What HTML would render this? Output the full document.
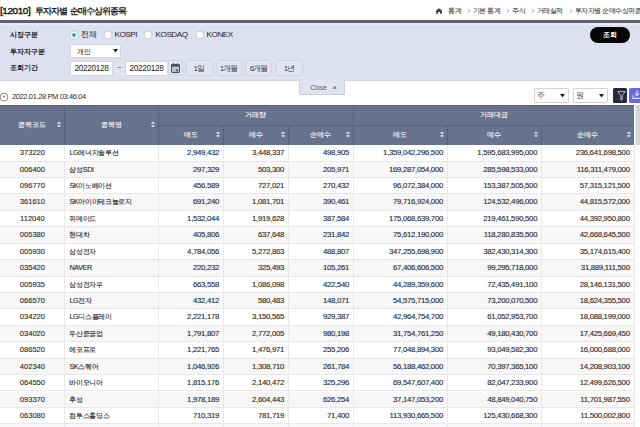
<!DOCTYPE html><html><head><meta charset="utf-8"><style>
*{box-sizing:border-box}
html,body{margin:0;padding:0;width:640px;height:427px;overflow:hidden;background:#fff;font-family:"Liberation Sans",sans-serif;color:#333}
.ab{position:absolute;white-space:nowrap}
.title{left:0;top:3.6px;font-size:9.9px;letter-spacing:-0.38px;color:#1e1e1e;line-height:14px;-webkit-text-stroke:0.45px #1e1e1e}
.title.k{font-size:9px;font-weight:bold;letter-spacing:-1px;-webkit-text-stroke:0}
.bc{top:5px;font-size:7px;letter-spacing:-0.5px;color:#4f4f4f;line-height:12px;-webkit-text-stroke:0.12px #4f4f4f}
.hline{left:0;top:20.3px;width:640px;height:2.5px;background:#5f6169}
.panel{left:0;top:22.7px;width:640px;height:58.6px;background:linear-gradient(#dde0ef 0,#dde0ef 52px,#e1e3f0 56px,#d3d6e2 57px,#d3d6e2 58.6px)}
.panel:before{content:"";position:absolute;left:0;top:0;width:640px;height:2px;background:#e9ebf6}
.lbl{font-size:7.4px;font-weight:bold;color:#222;line-height:10px}
.radio{width:8px;height:8px;border-radius:50%;background:#fff;border:1px solid #d4d6df}
.radio.on{border:1.2px solid #9fd3dd;box-shadow:0 0 0 0.5px #c6e8ee}
.radio.on:after{content:"";position:absolute;left:1.6px;top:1.6px;width:3.2px;height:3.2px;border-radius:50%;background:#3f9db3}
.rt{font-size:8.1px;color:#222;line-height:10px;letter-spacing:-0.45px}
.inp{background:#fff;border:1px solid #d3d5e0;border-radius:1px}
.btn{border:1px solid #cfd2e0;background:#e2e5f1;border-radius:1.5px;font-size:8px;letter-spacing:-1px;text-indent:-1px;color:#3a3a3a;text-align:center;line-height:15.5px}
.tab{left:298.8px;top:79.5px;width:46px;height:15.8px;background:#e1e3f0;border:1px solid #cdd0dc;border-top:none;border-radius:0 0 1.5px 1.5px}
.hdr{background:#67728d;color:#f2f3f7;font-size:6.8px;text-align:center;-webkit-text-stroke:0.15px #f2f3f7}
.vd{background:#56617c;width:1px}
.cell{font-size:7.8px;letter-spacing:-0.3px;color:#2a2a2a;line-height:12px;-webkit-text-stroke:0.12px #2a2a2a}
.code{font-size:7.6px;letter-spacing:0}
.nm{font-size:7.2px;letter-spacing:-0.35px}
.sort{width:4px;height:7px}
</style></head><body>

<div class="ab title">[12010]</div>
<div class="ab title k" style="left:34.8px">투자자별</div>
<div class="ab title k" style="left:69.8px">순매수상위종목</div>
<svg class="ab" style="left:436px;top:8.2px" width="6" height="6" viewBox="0 0 6 6"><path d="M0.1 2.6 Q0.3 2.2 3 0.2 Q5.7 2.2 5.9 2.6 L5.9 5.7 L4 5.7 L4 4.1 L2 4.1 L2 5.7 L0.1 5.7 Z" fill="#404040"/></svg>
<div class="ab bc" style="left:448px">통계</div>
<div class="ab bc" style="left:472.8px">기본 통계</div>
<div class="ab bc" style="left:512.4px">주식</div>
<div class="ab bc" style="left:536.8px">거래실적</div>
<div class="ab bc" style="left:574.6px">투자자별 순매수상위종목</div>
<svg class="ab" style="left:467px;top:8.2px" width="4" height="6" viewBox="0 0 4 6"><path d="M0.9 0.9 L3.1 3 L0.9 5.1" fill="none" stroke="#9a9a9a" stroke-width="0.7"/></svg>
<svg class="ab" style="left:505.6px;top:8.2px" width="4" height="6" viewBox="0 0 4 6"><path d="M0.9 0.9 L3.1 3 L0.9 5.1" fill="none" stroke="#9a9a9a" stroke-width="0.7"/></svg>
<svg class="ab" style="left:531.4px;top:8.2px" width="4" height="6" viewBox="0 0 4 6"><path d="M0.9 0.9 L3.1 3 L0.9 5.1" fill="none" stroke="#9a9a9a" stroke-width="0.7"/></svg>
<svg class="ab" style="left:568.7px;top:8.2px" width="4" height="6" viewBox="0 0 4 6"><path d="M0.9 0.9 L3.1 3 L0.9 5.1" fill="none" stroke="#9a9a9a" stroke-width="0.7"/></svg>
<div class="ab hline"></div>
<div class="ab panel"></div>
<div class="ab lbl" style="left:10px;top:29.6px">시장구분</div>
<div class="ab lbl" style="left:10px;top:46.6px">투자자구분</div>
<div class="ab lbl" style="left:10px;top:63.3px">조회기간</div>
<svg class="ab" style="left:69.1px;top:30px" width="10" height="10" viewBox="0 0 10 10"><circle cx="5" cy="5" r="4.1" fill="#fff" stroke="#a9dde6" stroke-width="1.1"/><circle cx="5" cy="5" r="1.9" fill="#4597a9"/></svg>
<svg class="ab" style="left:102.5px;top:30px" width="10" height="10" viewBox="0 0 10 10"><circle cx="5" cy="5" r="3.9" fill="#fff" stroke="#c4c7d2" stroke-width="0.9"/></svg>
<svg class="ab" style="left:143.3px;top:30px" width="10" height="10" viewBox="0 0 10 10"><circle cx="5" cy="5" r="3.9" fill="#fff" stroke="#c4c7d2" stroke-width="0.9"/></svg>
<svg class="ab" style="left:194.5px;top:30px" width="10" height="10" viewBox="0 0 10 10"><circle cx="5" cy="5" r="3.9" fill="#fff" stroke="#c4c7d2" stroke-width="0.9"/></svg>
<div class="ab rt" style="left:81px;top:29.8px">전체</div>
<div class="ab rt" style="left:114.5px;top:29.8px">KOSPI</div>
<div class="ab rt" style="left:155.6px;top:29.8px">KOSDAQ</div>
<div class="ab rt" style="left:206.6px;top:29.8px">KONEX</div>
<div class="ab inp" style="left:70px;top:43.7px;width:51.3px;height:14.5px"></div>
<div class="ab" style="left:76.6px;top:46.6px;font-size:7px;color:#3c3c3c;line-height:10px;-webkit-text-stroke:0.1px #3c3c3c">개인</div>
<svg class="ab" style="left:113px;top:49px" width="5" height="4" viewBox="0 0 5 4"><path d="M0 0 L5 0 L2.5 3.5 Z" fill="#222"/></svg>
<div class="ab inp" style="left:70px;top:60.6px;width:43px;height:15px"></div>
<div class="ab" style="left:74.5px;top:64px;font-size:8.2px;letter-spacing:-0.3px;color:#222;line-height:10px">20220128</div>
<div class="ab" style="left:113px;top:60px;width:12px;height:16px;background:#e1e3f0"></div>
<div class="ab" style="left:117.5px;top:62.5px;font-size:7px;color:#444;line-height:10px">~</div>
<div class="ab inp" style="left:125px;top:60.6px;width:43.2px;height:15px"></div>
<div class="ab" style="left:129.4px;top:64px;font-size:8.2px;letter-spacing:-0.3px;color:#222;line-height:10px">20220128</div>
<div class="ab btn" style="left:168px;top:60.3px;width:14.5px;height:15px"></div>
<svg class="ab" style="left:171px;top:63px" width="9" height="10" viewBox="0 0 9 10"><rect x="0.6" y="1.6" width="7.8" height="7.8" rx="0.8" fill="none" stroke="#4a5063" stroke-width="1.2"/><rect x="0.6" y="1.6" width="7.8" height="2.2" fill="#4a5063"/><rect x="2" y="0" width="1" height="2" fill="#4a5063"/><rect x="6" y="0" width="1" height="2" fill="#4a5063"/><rect x="1.6" y="4.6" width="5.8" height="4" fill="#b9bdcb"/><rect x="5" y="6.4" width="2" height="1.8" fill="#4a5063"/></svg>
<div class="ab btn" style="left:186px;top:60.2px;width:26.5px;height:15.4px">1일</div>
<div class="ab btn" style="left:216px;top:60.2px;width:26px;height:15.4px">1개월</div>
<div class="ab btn" style="left:245.4px;top:60.2px;width:27px;height:15.4px">6개월</div>
<div class="ab btn" style="left:276px;top:60.2px;width:27px;height:15.4px">1년</div>
<div class="ab" style="left:590px;top:26.5px;width:40.3px;height:16px;border-radius:8px;background:#050505;color:#fff;font-size:7.4px;font-weight:bold;text-align:center;line-height:16px">조회</div>
<div class="ab tab"></div>
<div class="ab" style="left:310.5px;top:82.5px;font-size:6.4px;color:#555;line-height:9px">Close</div>
<div class="ab" style="left:332.6px;top:83.3px;font-size:7.4px;color:#333;line-height:9px">×</div>
<svg class="ab" style="left:-0.9px;top:91.5px" width="10" height="10" viewBox="0 0 10 10"><circle cx="5" cy="5" r="3.9" fill="none" stroke="#8a8a8a" stroke-width="1"/><path d="M3.6 3.8 L6 5.3" fill="none" stroke="#777" stroke-width="1.1"/></svg>
<div class="ab" style="left:12px;top:91.6px;font-size:7.5px;letter-spacing:-0.38px;color:#2e2e2e;line-height:9px">2022.01.28 PM 03:46:04</div>
<div class="ab inp" style="left:534.4px;top:88.1px;width:35px;height:14.6px;border-color:#d3d3d3"></div>
<div class="ab" style="left:537.0px;top:89.6px;font-size:8.2px;color:#505050;line-height:11px">주</div>
<svg class="ab" style="left:559.9px;top:93.5px" width="5" height="4" viewBox="0 0 5 4"><path d="M0 0 L5 0 L2.5 3.5 Z" fill="#222"/></svg>
<div class="ab inp" style="left:573.1px;top:88.1px;width:35px;height:14.6px;border-color:#d3d3d3"></div>
<div class="ab" style="left:575.7px;top:89.6px;font-size:8.2px;color:#505050;line-height:11px">원</div>
<svg class="ab" style="left:598.6px;top:93.5px" width="5" height="4" viewBox="0 0 5 4"><path d="M0 0 L5 0 L2.5 3.5 Z" fill="#222"/></svg>
<div class="ab" style="left:612.7px;top:88px;width:14.8px;height:14.7px;background:#252a3c;border-radius:1.5px"></div>
<svg class="ab" style="left:616.5px;top:91px" width="9" height="10" viewBox="0 0 9 10"><path d="M0.8 0.6 L8.2 0.6 L5.1 4.8 L5.1 8.6 L3.9 9.2 L3.9 4.8 Z" fill="none" stroke="#c9ccd8" stroke-width="0.9" stroke-linejoin="round"/></svg>
<div class="ab" style="left:629.4px;top:88px;width:14px;height:14.7px;background:#6a6cd8;border-radius:1.5px"></div>
<svg class="ab" style="left:632px;top:90.3px" width="10" height="10" viewBox="0 0 10 10"><path d="M5 0.5 L5 5.2 M2.8 3.3 L5 5.5 L7.2 3.3 M0.9 5.2 L0.9 8.4 L9.1 8.4 L9.1 5.2" fill="none" stroke="#dcdcfa" stroke-width="1.1"/></svg>
<div class="ab hdr" style="left:0;top:105px;width:634px;height:40.19999999999999px;border-top:1px solid #56607a"></div>
<div class="ab" style="left:634.6px;top:105px;width:6px;height:40.19999999999999px;background:linear-gradient(90deg,#e4e4e4 0,#e4e4e4 1.4px,#d5d5d5 1.6px)"></div>
<div class="ab" style="left:634.3px;top:145.2px;width:1.2px;height:281.8px;background:#e8e8e8"></div>
<div class="ab" style="left:0;top:145.20px;width:634px;height:16.42px;background:#ffffff;border-bottom:1px solid #e8e8e8"></div>
<div class="ab" style="left:0;top:161.62px;width:634px;height:16.42px;background:#f7f7f7;border-bottom:1px solid #e8e8e8"></div>
<div class="ab" style="left:0;top:178.04px;width:634px;height:16.42px;background:#ffffff;border-bottom:1px solid #e8e8e8"></div>
<div class="ab" style="left:0;top:194.46px;width:634px;height:16.42px;background:#f7f7f7;border-bottom:1px solid #e8e8e8"></div>
<div class="ab" style="left:0;top:210.88px;width:634px;height:16.42px;background:#ffffff;border-bottom:1px solid #e8e8e8"></div>
<div class="ab" style="left:0;top:227.30px;width:634px;height:16.42px;background:#f7f7f7;border-bottom:1px solid #e8e8e8"></div>
<div class="ab" style="left:0;top:243.72px;width:634px;height:16.42px;background:#ffffff;border-bottom:1px solid #e8e8e8"></div>
<div class="ab" style="left:0;top:260.14px;width:634px;height:16.42px;background:#f7f7f7;border-bottom:1px solid #e8e8e8"></div>
<div class="ab" style="left:0;top:276.56px;width:634px;height:16.42px;background:#ffffff;border-bottom:1px solid #e8e8e8"></div>
<div class="ab" style="left:0;top:292.98px;width:634px;height:16.42px;background:#f7f7f7;border-bottom:1px solid #e8e8e8"></div>
<div class="ab" style="left:0;top:309.40px;width:634px;height:16.42px;background:#ffffff;border-bottom:1px solid #e8e8e8"></div>
<div class="ab" style="left:0;top:325.82px;width:634px;height:16.42px;background:#f7f7f7;border-bottom:1px solid #e8e8e8"></div>
<div class="ab" style="left:0;top:342.24px;width:634px;height:16.42px;background:#ffffff;border-bottom:1px solid #e8e8e8"></div>
<div class="ab" style="left:0;top:358.66px;width:634px;height:16.42px;background:#f7f7f7;border-bottom:1px solid #e8e8e8"></div>
<div class="ab" style="left:0;top:375.08px;width:634px;height:16.42px;background:#ffffff;border-bottom:1px solid #e8e8e8"></div>
<div class="ab" style="left:0;top:391.50px;width:634px;height:16.42px;background:#f7f7f7;border-bottom:1px solid #e8e8e8"></div>
<div class="ab" style="left:0;top:407.92px;width:634px;height:16.42px;background:#ffffff;border-bottom:1px solid #e8e8e8"></div>
<div class="ab" style="left:0;top:424.34px;width:634px;height:16.42px;background:#f7f7f7;border-bottom:1px solid #e8e8e8"></div>
<div class="ab" style="left:64.3px;top:145.2px;width:1px;height:281.8px;background:#e9e9e9"></div>
<div class="ab" style="left:158.0px;top:145.2px;width:1px;height:281.8px;background:#e9e9e9"></div>
<div class="ab" style="left:222.9px;top:145.2px;width:1px;height:281.8px;background:#e9e9e9"></div>
<div class="ab" style="left:287.9px;top:145.2px;width:1px;height:281.8px;background:#e9e9e9"></div>
<div class="ab" style="left:352.9px;top:145.2px;width:1px;height:281.8px;background:#e9e9e9"></div>
<div class="ab" style="left:446.8px;top:145.2px;width:1px;height:281.8px;background:#e9e9e9"></div>
<div class="ab" style="left:541.0px;top:145.2px;width:1px;height:281.8px;background:#e9e9e9"></div>
<div class="ab vd" style="left:64.3px;top:105px;height:40.19999999999999px"></div>
<div class="ab vd" style="left:158.0px;top:105px;height:40.19999999999999px"></div>
<div class="ab vd" style="left:352.9px;top:105px;height:40.19999999999999px"></div>
<div class="ab vd" style="left:222.9px;top:125px;height:20.19999999999999px"></div>
<div class="ab vd" style="left:287.9px;top:125px;height:20.19999999999999px"></div>
<div class="ab vd" style="left:446.8px;top:125px;height:20.19999999999999px"></div>
<div class="ab vd" style="left:541.0px;top:125px;height:20.19999999999999px"></div>
<div class="ab" style="left:158.5px;top:124.5px;width:475.5px;height:1px;background:#56617c"></div>
<div class="ab hdr" style="left:0px;top:105px;width:64.8px;height:40.19999999999999px;line-height:40.19999999999999px;background:none">종목코드</div>
<svg class="ab sort" style="left:57.3px;top:120.8px" viewBox="0 0 4 7"><path d="M0.2 2.9 Q0.4 0.4 2 0.4 Q3.6 0.4 3.8 2.9 Z M0.2 3.9 Q0.4 6.3 2 6.3 Q3.6 6.3 3.8 3.9 Z" fill="#c6cde0"/></svg>
<div class="ab hdr" style="left:64.8px;top:105px;width:93.7px;height:40.19999999999999px;line-height:40.19999999999999px;background:none">종목명</div>
<svg class="ab sort" style="left:151.0px;top:120.8px" viewBox="0 0 4 7"><path d="M0.2 2.9 Q0.4 0.4 2 0.4 Q3.6 0.4 3.8 2.9 Z M0.2 3.9 Q0.4 6.3 2 6.3 Q3.6 6.3 3.8 3.9 Z" fill="#c6cde0"/></svg>
<div class="ab hdr" style="left:158.5px;top:105px;width:194.89999999999998px;height:20px;line-height:20px;background:none">거래량</div>
<div class="ab hdr" style="left:353.4px;top:105px;width:280.6px;height:20px;line-height:20px;background:none">거래대금</div>
<div class="ab hdr" style="left:158.5px;top:125px;width:64.9px;height:20.19999999999999px;line-height:20.19999999999999px;background:none">매도</div>
<svg class="ab sort" style="left:215.9px;top:130.79999999999998px" viewBox="0 0 4 7"><path d="M0.2 2.9 Q0.4 0.4 2 0.4 Q3.6 0.4 3.8 2.9 Z M0.2 3.9 Q0.4 6.3 2 6.3 Q3.6 6.3 3.8 3.9 Z" fill="#c6cde0"/></svg>
<div class="ab hdr" style="left:223.4px;top:125px;width:64.99999999999997px;height:20.19999999999999px;line-height:20.19999999999999px;background:none">매수</div>
<svg class="ab sort" style="left:280.9px;top:130.79999999999998px" viewBox="0 0 4 7"><path d="M0.2 2.9 Q0.4 0.4 2 0.4 Q3.6 0.4 3.8 2.9 Z M0.2 3.9 Q0.4 6.3 2 6.3 Q3.6 6.3 3.8 3.9 Z" fill="#c6cde0"/></svg>
<div class="ab hdr" style="left:288.4px;top:125px;width:65.0px;height:20.19999999999999px;line-height:20.19999999999999px;background:none">순매수</div>
<svg class="ab sort" style="left:345.9px;top:130.79999999999998px" viewBox="0 0 4 7"><path d="M0.2 2.9 Q0.4 0.4 2 0.4 Q3.6 0.4 3.8 2.9 Z M0.2 3.9 Q0.4 6.3 2 6.3 Q3.6 6.3 3.8 3.9 Z" fill="#c6cde0"/></svg>
<div class="ab hdr" style="left:353.4px;top:125px;width:93.90000000000003px;height:20.19999999999999px;line-height:20.19999999999999px;background:none">매도</div>
<svg class="ab sort" style="left:439.8px;top:130.79999999999998px" viewBox="0 0 4 7"><path d="M0.2 2.9 Q0.4 0.4 2 0.4 Q3.6 0.4 3.8 2.9 Z M0.2 3.9 Q0.4 6.3 2 6.3 Q3.6 6.3 3.8 3.9 Z" fill="#c6cde0"/></svg>
<div class="ab hdr" style="left:447.3px;top:125px;width:94.19999999999999px;height:20.19999999999999px;line-height:20.19999999999999px;background:none">매수</div>
<svg class="ab sort" style="left:534.0px;top:130.79999999999998px" viewBox="0 0 4 7"><path d="M0.2 2.9 Q0.4 0.4 2 0.4 Q3.6 0.4 3.8 2.9 Z M0.2 3.9 Q0.4 6.3 2 6.3 Q3.6 6.3 3.8 3.9 Z" fill="#c6cde0"/></svg>
<div class="ab hdr" style="left:541.5px;top:125px;width:92.5px;height:20.19999999999999px;line-height:20.19999999999999px;background:none">순매수</div>
<svg class="ab sort" style="left:626.5px;top:130.79999999999998px" viewBox="0 0 4 7"><path d="M0.2 2.9 Q0.4 0.4 2 0.4 Q3.6 0.4 3.8 2.9 Z M0.2 3.9 Q0.4 6.3 2 6.3 Q3.6 6.3 3.8 3.9 Z" fill="#c6cde0"/></svg>
<div class="ab cell code" style="left:0;top:145.20px;width:64.8px;height:16.42px;line-height:16.42px;text-align:center">373220</div>
<div class="ab cell nm" style="left:69.39999999999999px;top:145.20px;height:16.42px;line-height:16.42px">LG에너지솔루션</div>
<div class="ab cell" style="left:158.5px;top:145.20px;width:60.599999999999994px;height:16.42px;line-height:16.42px;text-align:right">2,949,432</div>
<div class="ab cell" style="left:223.4px;top:145.20px;width:60.69999999999996px;height:16.42px;line-height:16.42px;text-align:right">3,448,337</div>
<div class="ab cell" style="left:288.4px;top:145.20px;width:60.69999999999999px;height:16.42px;line-height:16.42px;text-align:right">498,905</div>
<div class="ab cell" style="left:353.4px;top:145.20px;width:89.60000000000002px;height:16.42px;line-height:16.42px;text-align:right">1,359,042,296,500</div>
<div class="ab cell" style="left:447.3px;top:145.20px;width:89.90000000000003px;height:16.42px;line-height:16.42px;text-align:right">1,595,683,995,000</div>
<div class="ab cell" style="left:541.5px;top:145.20px;width:88.20000000000005px;height:16.42px;line-height:16.42px;text-align:right">236,641,698,500</div>
<div class="ab cell code" style="left:0;top:161.62px;width:64.8px;height:16.42px;line-height:16.42px;text-align:center">006400</div>
<div class="ab cell nm" style="left:69.39999999999999px;top:161.62px;height:16.42px;line-height:16.42px">삼성SDI</div>
<div class="ab cell" style="left:158.5px;top:161.62px;width:60.599999999999994px;height:16.42px;line-height:16.42px;text-align:right">297,329</div>
<div class="ab cell" style="left:223.4px;top:161.62px;width:60.69999999999996px;height:16.42px;line-height:16.42px;text-align:right">503,300</div>
<div class="ab cell" style="left:288.4px;top:161.62px;width:60.69999999999999px;height:16.42px;line-height:16.42px;text-align:right">205,971</div>
<div class="ab cell" style="left:353.4px;top:161.62px;width:89.60000000000002px;height:16.42px;line-height:16.42px;text-align:right">169,287,054,000</div>
<div class="ab cell" style="left:447.3px;top:161.62px;width:89.90000000000003px;height:16.42px;line-height:16.42px;text-align:right">285,598,533,000</div>
<div class="ab cell" style="left:541.5px;top:161.62px;width:88.20000000000005px;height:16.42px;line-height:16.42px;text-align:right">116,311,479,000</div>
<div class="ab cell code" style="left:0;top:178.04px;width:64.8px;height:16.42px;line-height:16.42px;text-align:center">096770</div>
<div class="ab cell nm" style="left:69.39999999999999px;top:178.04px;height:16.42px;line-height:16.42px">SK이노베이션</div>
<div class="ab cell" style="left:158.5px;top:178.04px;width:60.599999999999994px;height:16.42px;line-height:16.42px;text-align:right">456,589</div>
<div class="ab cell" style="left:223.4px;top:178.04px;width:60.69999999999996px;height:16.42px;line-height:16.42px;text-align:right">727,021</div>
<div class="ab cell" style="left:288.4px;top:178.04px;width:60.69999999999999px;height:16.42px;line-height:16.42px;text-align:right">270,432</div>
<div class="ab cell" style="left:353.4px;top:178.04px;width:89.60000000000002px;height:16.42px;line-height:16.42px;text-align:right">96,072,384,000</div>
<div class="ab cell" style="left:447.3px;top:178.04px;width:89.90000000000003px;height:16.42px;line-height:16.42px;text-align:right">153,387,505,500</div>
<div class="ab cell" style="left:541.5px;top:178.04px;width:88.20000000000005px;height:16.42px;line-height:16.42px;text-align:right">57,315,121,500</div>
<div class="ab cell code" style="left:0;top:194.46px;width:64.8px;height:16.42px;line-height:16.42px;text-align:center">361610</div>
<div class="ab cell nm" style="left:69.39999999999999px;top:194.46px;height:16.42px;line-height:16.42px">SK아이이테크놀로지</div>
<div class="ab cell" style="left:158.5px;top:194.46px;width:60.599999999999994px;height:16.42px;line-height:16.42px;text-align:right">691,240</div>
<div class="ab cell" style="left:223.4px;top:194.46px;width:60.69999999999996px;height:16.42px;line-height:16.42px;text-align:right">1,081,701</div>
<div class="ab cell" style="left:288.4px;top:194.46px;width:60.69999999999999px;height:16.42px;line-height:16.42px;text-align:right">390,461</div>
<div class="ab cell" style="left:353.4px;top:194.46px;width:89.60000000000002px;height:16.42px;line-height:16.42px;text-align:right">79,716,924,000</div>
<div class="ab cell" style="left:447.3px;top:194.46px;width:89.90000000000003px;height:16.42px;line-height:16.42px;text-align:right">124,532,496,000</div>
<div class="ab cell" style="left:541.5px;top:194.46px;width:88.20000000000005px;height:16.42px;line-height:16.42px;text-align:right">44,815,572,000</div>
<div class="ab cell code" style="left:0;top:210.88px;width:64.8px;height:16.42px;line-height:16.42px;text-align:center">112040</div>
<div class="ab cell nm" style="left:69.39999999999999px;top:210.88px;height:16.42px;line-height:16.42px">위메이드</div>
<div class="ab cell" style="left:158.5px;top:210.88px;width:60.599999999999994px;height:16.42px;line-height:16.42px;text-align:right">1,532,044</div>
<div class="ab cell" style="left:223.4px;top:210.88px;width:60.69999999999996px;height:16.42px;line-height:16.42px;text-align:right">1,919,628</div>
<div class="ab cell" style="left:288.4px;top:210.88px;width:60.69999999999999px;height:16.42px;line-height:16.42px;text-align:right">387,584</div>
<div class="ab cell" style="left:353.4px;top:210.88px;width:89.60000000000002px;height:16.42px;line-height:16.42px;text-align:right">175,068,639,700</div>
<div class="ab cell" style="left:447.3px;top:210.88px;width:89.90000000000003px;height:16.42px;line-height:16.42px;text-align:right">219,461,590,500</div>
<div class="ab cell" style="left:541.5px;top:210.88px;width:88.20000000000005px;height:16.42px;line-height:16.42px;text-align:right">44,392,950,800</div>
<div class="ab cell code" style="left:0;top:227.30px;width:64.8px;height:16.42px;line-height:16.42px;text-align:center">005380</div>
<div class="ab cell nm" style="left:69.39999999999999px;top:227.30px;height:16.42px;line-height:16.42px">현대차</div>
<div class="ab cell" style="left:158.5px;top:227.30px;width:60.599999999999994px;height:16.42px;line-height:16.42px;text-align:right">405,806</div>
<div class="ab cell" style="left:223.4px;top:227.30px;width:60.69999999999996px;height:16.42px;line-height:16.42px;text-align:right">637,648</div>
<div class="ab cell" style="left:288.4px;top:227.30px;width:60.69999999999999px;height:16.42px;line-height:16.42px;text-align:right">231,842</div>
<div class="ab cell" style="left:353.4px;top:227.30px;width:89.60000000000002px;height:16.42px;line-height:16.42px;text-align:right">75,612,190,000</div>
<div class="ab cell" style="left:447.3px;top:227.30px;width:89.90000000000003px;height:16.42px;line-height:16.42px;text-align:right">118,280,835,500</div>
<div class="ab cell" style="left:541.5px;top:227.30px;width:88.20000000000005px;height:16.42px;line-height:16.42px;text-align:right">42,668,645,500</div>
<div class="ab cell code" style="left:0;top:243.72px;width:64.8px;height:16.42px;line-height:16.42px;text-align:center">005930</div>
<div class="ab cell nm" style="left:69.39999999999999px;top:243.72px;height:16.42px;line-height:16.42px">삼성전자</div>
<div class="ab cell" style="left:158.5px;top:243.72px;width:60.599999999999994px;height:16.42px;line-height:16.42px;text-align:right">4,784,056</div>
<div class="ab cell" style="left:223.4px;top:243.72px;width:60.69999999999996px;height:16.42px;line-height:16.42px;text-align:right">5,272,863</div>
<div class="ab cell" style="left:288.4px;top:243.72px;width:60.69999999999999px;height:16.42px;line-height:16.42px;text-align:right">488,807</div>
<div class="ab cell" style="left:353.4px;top:243.72px;width:89.60000000000002px;height:16.42px;line-height:16.42px;text-align:right">347,255,698,900</div>
<div class="ab cell" style="left:447.3px;top:243.72px;width:89.90000000000003px;height:16.42px;line-height:16.42px;text-align:right">382,430,314,300</div>
<div class="ab cell" style="left:541.5px;top:243.72px;width:88.20000000000005px;height:16.42px;line-height:16.42px;text-align:right">35,174,615,400</div>
<div class="ab cell code" style="left:0;top:260.14px;width:64.8px;height:16.42px;line-height:16.42px;text-align:center">035420</div>
<div class="ab cell nm" style="left:69.39999999999999px;top:260.14px;height:16.42px;line-height:16.42px">NAVER</div>
<div class="ab cell" style="left:158.5px;top:260.14px;width:60.599999999999994px;height:16.42px;line-height:16.42px;text-align:right">220,232</div>
<div class="ab cell" style="left:223.4px;top:260.14px;width:60.69999999999996px;height:16.42px;line-height:16.42px;text-align:right">325,493</div>
<div class="ab cell" style="left:288.4px;top:260.14px;width:60.69999999999999px;height:16.42px;line-height:16.42px;text-align:right">105,261</div>
<div class="ab cell" style="left:353.4px;top:260.14px;width:89.60000000000002px;height:16.42px;line-height:16.42px;text-align:right">67,406,606,500</div>
<div class="ab cell" style="left:447.3px;top:260.14px;width:89.90000000000003px;height:16.42px;line-height:16.42px;text-align:right">99,295,718,000</div>
<div class="ab cell" style="left:541.5px;top:260.14px;width:88.20000000000005px;height:16.42px;line-height:16.42px;text-align:right">31,889,111,500</div>
<div class="ab cell code" style="left:0;top:276.56px;width:64.8px;height:16.42px;line-height:16.42px;text-align:center">005935</div>
<div class="ab cell nm" style="left:69.39999999999999px;top:276.56px;height:16.42px;line-height:16.42px">삼성전자우</div>
<div class="ab cell" style="left:158.5px;top:276.56px;width:60.599999999999994px;height:16.42px;line-height:16.42px;text-align:right">663,558</div>
<div class="ab cell" style="left:223.4px;top:276.56px;width:60.69999999999996px;height:16.42px;line-height:16.42px;text-align:right">1,086,098</div>
<div class="ab cell" style="left:288.4px;top:276.56px;width:60.69999999999999px;height:16.42px;line-height:16.42px;text-align:right">422,540</div>
<div class="ab cell" style="left:353.4px;top:276.56px;width:89.60000000000002px;height:16.42px;line-height:16.42px;text-align:right">44,289,359,600</div>
<div class="ab cell" style="left:447.3px;top:276.56px;width:89.90000000000003px;height:16.42px;line-height:16.42px;text-align:right">72,435,491,100</div>
<div class="ab cell" style="left:541.5px;top:276.56px;width:88.20000000000005px;height:16.42px;line-height:16.42px;text-align:right">28,146,131,500</div>
<div class="ab cell code" style="left:0;top:292.98px;width:64.8px;height:16.42px;line-height:16.42px;text-align:center">066570</div>
<div class="ab cell nm" style="left:69.39999999999999px;top:292.98px;height:16.42px;line-height:16.42px">LG전자</div>
<div class="ab cell" style="left:158.5px;top:292.98px;width:60.599999999999994px;height:16.42px;line-height:16.42px;text-align:right">432,412</div>
<div class="ab cell" style="left:223.4px;top:292.98px;width:60.69999999999996px;height:16.42px;line-height:16.42px;text-align:right">580,483</div>
<div class="ab cell" style="left:288.4px;top:292.98px;width:60.69999999999999px;height:16.42px;line-height:16.42px;text-align:right">148,071</div>
<div class="ab cell" style="left:353.4px;top:292.98px;width:89.60000000000002px;height:16.42px;line-height:16.42px;text-align:right">54,575,715,000</div>
<div class="ab cell" style="left:447.3px;top:292.98px;width:89.90000000000003px;height:16.42px;line-height:16.42px;text-align:right">73,200,070,500</div>
<div class="ab cell" style="left:541.5px;top:292.98px;width:88.20000000000005px;height:16.42px;line-height:16.42px;text-align:right">18,624,355,500</div>
<div class="ab cell code" style="left:0;top:309.40px;width:64.8px;height:16.42px;line-height:16.42px;text-align:center">034220</div>
<div class="ab cell nm" style="left:69.39999999999999px;top:309.40px;height:16.42px;line-height:16.42px">LG디스플레이</div>
<div class="ab cell" style="left:158.5px;top:309.40px;width:60.599999999999994px;height:16.42px;line-height:16.42px;text-align:right">2,221,178</div>
<div class="ab cell" style="left:223.4px;top:309.40px;width:60.69999999999996px;height:16.42px;line-height:16.42px;text-align:right">3,150,565</div>
<div class="ab cell" style="left:288.4px;top:309.40px;width:60.69999999999999px;height:16.42px;line-height:16.42px;text-align:right">929,387</div>
<div class="ab cell" style="left:353.4px;top:309.40px;width:89.60000000000002px;height:16.42px;line-height:16.42px;text-align:right">42,964,754,700</div>
<div class="ab cell" style="left:447.3px;top:309.40px;width:89.90000000000003px;height:16.42px;line-height:16.42px;text-align:right">61,052,953,700</div>
<div class="ab cell" style="left:541.5px;top:309.40px;width:88.20000000000005px;height:16.42px;line-height:16.42px;text-align:right">18,088,199,000</div>
<div class="ab cell code" style="left:0;top:325.82px;width:64.8px;height:16.42px;line-height:16.42px;text-align:center">034020</div>
<div class="ab cell nm" style="left:69.39999999999999px;top:325.82px;height:16.42px;line-height:16.42px">두산중공업</div>
<div class="ab cell" style="left:158.5px;top:325.82px;width:60.599999999999994px;height:16.42px;line-height:16.42px;text-align:right">1,791,807</div>
<div class="ab cell" style="left:223.4px;top:325.82px;width:60.69999999999996px;height:16.42px;line-height:16.42px;text-align:right">2,772,005</div>
<div class="ab cell" style="left:288.4px;top:325.82px;width:60.69999999999999px;height:16.42px;line-height:16.42px;text-align:right">980,198</div>
<div class="ab cell" style="left:353.4px;top:325.82px;width:89.60000000000002px;height:16.42px;line-height:16.42px;text-align:right">31,754,761,250</div>
<div class="ab cell" style="left:447.3px;top:325.82px;width:89.90000000000003px;height:16.42px;line-height:16.42px;text-align:right">49,180,430,700</div>
<div class="ab cell" style="left:541.5px;top:325.82px;width:88.20000000000005px;height:16.42px;line-height:16.42px;text-align:right">17,425,669,450</div>
<div class="ab cell code" style="left:0;top:342.24px;width:64.8px;height:16.42px;line-height:16.42px;text-align:center">086520</div>
<div class="ab cell nm" style="left:69.39999999999999px;top:342.24px;height:16.42px;line-height:16.42px">에코프로</div>
<div class="ab cell" style="left:158.5px;top:342.24px;width:60.599999999999994px;height:16.42px;line-height:16.42px;text-align:right">1,221,765</div>
<div class="ab cell" style="left:223.4px;top:342.24px;width:60.69999999999996px;height:16.42px;line-height:16.42px;text-align:right">1,476,971</div>
<div class="ab cell" style="left:288.4px;top:342.24px;width:60.69999999999999px;height:16.42px;line-height:16.42px;text-align:right">255,206</div>
<div class="ab cell" style="left:353.4px;top:342.24px;width:89.60000000000002px;height:16.42px;line-height:16.42px;text-align:right">77,048,894,300</div>
<div class="ab cell" style="left:447.3px;top:342.24px;width:89.90000000000003px;height:16.42px;line-height:16.42px;text-align:right">93,049,582,300</div>
<div class="ab cell" style="left:541.5px;top:342.24px;width:88.20000000000005px;height:16.42px;line-height:16.42px;text-align:right">16,000,688,000</div>
<div class="ab cell code" style="left:0;top:358.66px;width:64.8px;height:16.42px;line-height:16.42px;text-align:center">402340</div>
<div class="ab cell nm" style="left:69.39999999999999px;top:358.66px;height:16.42px;line-height:16.42px">SK스퀘어</div>
<div class="ab cell" style="left:158.5px;top:358.66px;width:60.599999999999994px;height:16.42px;line-height:16.42px;text-align:right">1,046,926</div>
<div class="ab cell" style="left:223.4px;top:358.66px;width:60.69999999999996px;height:16.42px;line-height:16.42px;text-align:right">1,308,710</div>
<div class="ab cell" style="left:288.4px;top:358.66px;width:60.69999999999999px;height:16.42px;line-height:16.42px;text-align:right">261,784</div>
<div class="ab cell" style="left:353.4px;top:358.66px;width:89.60000000000002px;height:16.42px;line-height:16.42px;text-align:right">56,188,462,000</div>
<div class="ab cell" style="left:447.3px;top:358.66px;width:89.90000000000003px;height:16.42px;line-height:16.42px;text-align:right">70,397,365,100</div>
<div class="ab cell" style="left:541.5px;top:358.66px;width:88.20000000000005px;height:16.42px;line-height:16.42px;text-align:right">14,208,903,100</div>
<div class="ab cell code" style="left:0;top:375.08px;width:64.8px;height:16.42px;line-height:16.42px;text-align:center">064550</div>
<div class="ab cell nm" style="left:69.39999999999999px;top:375.08px;height:16.42px;line-height:16.42px">바이오니아</div>
<div class="ab cell" style="left:158.5px;top:375.08px;width:60.599999999999994px;height:16.42px;line-height:16.42px;text-align:right">1,815,176</div>
<div class="ab cell" style="left:223.4px;top:375.08px;width:60.69999999999996px;height:16.42px;line-height:16.42px;text-align:right">2,140,472</div>
<div class="ab cell" style="left:288.4px;top:375.08px;width:60.69999999999999px;height:16.42px;line-height:16.42px;text-align:right">325,296</div>
<div class="ab cell" style="left:353.4px;top:375.08px;width:89.60000000000002px;height:16.42px;line-height:16.42px;text-align:right">69,547,607,400</div>
<div class="ab cell" style="left:447.3px;top:375.08px;width:89.90000000000003px;height:16.42px;line-height:16.42px;text-align:right">82,047,233,900</div>
<div class="ab cell" style="left:541.5px;top:375.08px;width:88.20000000000005px;height:16.42px;line-height:16.42px;text-align:right">12,499,626,500</div>
<div class="ab cell code" style="left:0;top:391.50px;width:64.8px;height:16.42px;line-height:16.42px;text-align:center">093370</div>
<div class="ab cell nm" style="left:69.39999999999999px;top:391.50px;height:16.42px;line-height:16.42px">후성</div>
<div class="ab cell" style="left:158.5px;top:391.50px;width:60.599999999999994px;height:16.42px;line-height:16.42px;text-align:right">1,978,189</div>
<div class="ab cell" style="left:223.4px;top:391.50px;width:60.69999999999996px;height:16.42px;line-height:16.42px;text-align:right">2,604,443</div>
<div class="ab cell" style="left:288.4px;top:391.50px;width:60.69999999999999px;height:16.42px;line-height:16.42px;text-align:right">626,254</div>
<div class="ab cell" style="left:353.4px;top:391.50px;width:89.60000000000002px;height:16.42px;line-height:16.42px;text-align:right">37,147,053,200</div>
<div class="ab cell" style="left:447.3px;top:391.50px;width:89.90000000000003px;height:16.42px;line-height:16.42px;text-align:right">48,849,040,750</div>
<div class="ab cell" style="left:541.5px;top:391.50px;width:88.20000000000005px;height:16.42px;line-height:16.42px;text-align:right">11,701,987,550</div>
<div class="ab cell code" style="left:0;top:407.92px;width:64.8px;height:16.42px;line-height:16.42px;text-align:center">063080</div>
<div class="ab cell nm" style="left:69.39999999999999px;top:407.92px;height:16.42px;line-height:16.42px">컴투스홀딩스</div>
<div class="ab cell" style="left:158.5px;top:407.92px;width:60.599999999999994px;height:16.42px;line-height:16.42px;text-align:right">710,319</div>
<div class="ab cell" style="left:223.4px;top:407.92px;width:60.69999999999996px;height:16.42px;line-height:16.42px;text-align:right">781,719</div>
<div class="ab cell" style="left:288.4px;top:407.92px;width:60.69999999999999px;height:16.42px;line-height:16.42px;text-align:right">71,400</div>
<div class="ab cell" style="left:353.4px;top:407.92px;width:89.60000000000002px;height:16.42px;line-height:16.42px;text-align:right">113,930,665,500</div>
<div class="ab cell" style="left:447.3px;top:407.92px;width:89.90000000000003px;height:16.42px;line-height:16.42px;text-align:right">125,430,668,300</div>
<div class="ab cell" style="left:541.5px;top:407.92px;width:88.20000000000005px;height:16.42px;line-height:16.42px;text-align:right">11,500,002,800</div>
</body></html>
